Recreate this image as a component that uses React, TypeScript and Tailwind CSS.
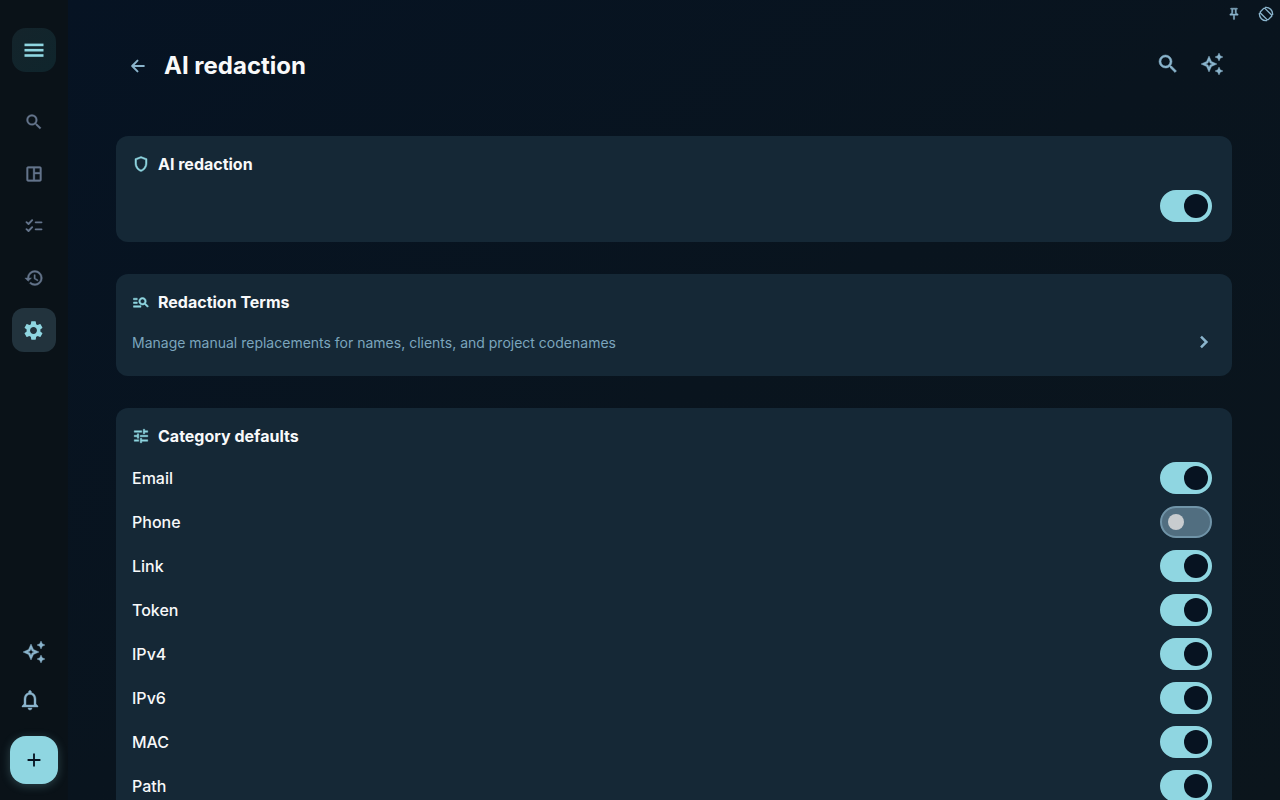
import { useState } from "react";
import type { ReactNode } from "react";
import {
  MdAdd,
  MdHistory,
  MdManageSearch,
  MdOutlineAutoAwesome,
  MdNotificationsNone,
  MdOutlinePushPin,
  MdOutlineShield,
  MdOutlineSpaceDashboard,
  MdSearch,
  MdSettings,
  MdTune,
} from "react-icons/md";

// Thickens the icon outlines; the empty bounding path must stay unstroked
const BOLD = "[&>path[fill=none]]:stroke-none";

const NAV_ITEMS = [
  { id: "search", label: "Search", icon: <MdSearch size={20} strokeWidth={0.4} className={BOLD} /> },
  { id: "board", label: "Board", icon: <MdOutlineSpaceDashboard size={20} strokeWidth={0.4} className={BOLD} /> },
  { id: "tasks", label: "Tasks", icon: <ChecklistIcon /> },
  { id: "history", label: "History", icon: <MdHistory size={20} strokeWidth={0.5} className={BOLD} /> },
  { id: "settings", label: "Settings", icon: <MdSettings size={23} /> },
];

const CATEGORIES = ["Email", "Phone", "Link", "Token", "IPv4", "IPv6", "MAC", "Path"];

function MenuIcon() {
  return (
    <svg width="24" height="24" viewBox="0 0 24 24" fill="currentColor">
      <rect x="2.5" y="5.6" width="19" height="2.6" />
      <rect x="2.5" y="10.9" width="19" height="2.6" />
      <rect x="2.5" y="16.2" width="19" height="2.6" />
    </svg>
  );
}

function ChecklistIcon() {
  return (
    <svg
      width="20"
      height="20"
      viewBox="0 0 24 24"
      fill="none"
      stroke="currentColor"
      strokeWidth="2.3"
      strokeLinecap="round"
      strokeLinejoin="round"
    >
      <path d="M3 7.4l2.4 2.2L9.8 5M3 15.8l2.4 2.2 4.4-4.6M14 7.6h7M14 16h7" />
    </svg>
  );
}

function BackIcon() {
  return (
    <svg
      width="20"
      height="20"
      viewBox="0 0 24 24"
      fill="none"
      stroke="currentColor"
      strokeWidth="2.4"
      strokeLinecap="round"
      strokeLinejoin="round"
    >
      <path d="M19 12H5.4M11.4 5.6L5 12l6.4 6.4" />
    </svg>
  );
}

function ChevronIcon() {
  return (
    <svg width="24" height="24" viewBox="0 0 24 24" fill="none" stroke="currentColor" strokeWidth="2.5">
      <path d="M9 6.6l5.4 5.4L9 17.4" />
    </svg>
  );
}

// Tilted phone inside a broken ring
function RotationIcon() {
  return (
    <svg width="16" height="16" viewBox="0 0 24 24" fill="none" stroke="currentColor" strokeWidth="2.1">
      <rect x="7.2" y="3.6" width="9.6" height="16.8" rx="1.8" transform="rotate(-45 12 12)" />
      <path d="M10.5 2.2a10 10 0 0 1 11.3 11.3M13.5 21.8A10 10 0 0 1 2.2 10.5" />
    </svg>
  );
}

function Toggle({ label, defaultOn = true }: { label: string; defaultOn?: boolean }) {
  const [on, setOn] = useState(defaultOn);

  return (
    <button
      type="button"
      role="switch"
      aria-checked={on}
      aria-label={label}
      onClick={() => setOn((v) => !v)}
      className={`flex h-8 w-[52px] shrink-0 items-center rounded-full border-2 ${
        on ? "justify-end border-[#8fd6e1] bg-[#8fd6e1] pr-0.5" : "border-[#7094a8] bg-[#516e80] pl-1.5"
      }`}
    >
      <span className={on ? "size-6 rounded-full bg-[#071321]" : "size-4 rounded-full bg-[#c8cccf]"} />
    </button>
  );
}

function Card({ icon, title, children }: { icon: ReactNode; title: string; children: ReactNode }) {
  return (
    <section className="flex flex-col gap-2 rounded-xl bg-[#152836] px-4 pt-4 pb-3.5">
      <div className="flex h-6 items-center gap-2">
        <span className="text-[#8fd6e1]">{icon}</span>
        <h2 className="text-base font-bold text-[#f8f9fa]">{title}</h2>
      </div>
      {children}
    </section>
  );
}

function Sidebar() {
  const [active, setActive] = useState("settings");

  return (
    <aside className="flex w-[68px] shrink-0 flex-col items-center border-r border-[#0a1219] bg-[#0a1218] pt-7 pb-4">
      <button
        type="button"
        aria-label="Menu"
        className="flex size-11 items-center justify-center rounded-[14px] bg-linear-to-br from-[#14242b] to-[#0f252c] text-[#8fd6e1]"
      >
        <MenuIcon />
      </button>

      <nav className="mt-7 flex flex-col gap-2">
        {NAV_ITEMS.map((item) => (
          <button
            key={item.id}
            type="button"
            aria-label={item.label}
            onClick={() => setActive(item.id)}
            className={`flex size-11 items-center justify-center rounded-xl ${
              active === item.id ? "bg-[#22333d] text-[#8fd6e1]" : "text-[#64748b]"
            }`}
          >
            {item.icon}
          </button>
        ))}
      </nav>

      <div className="mt-auto flex flex-col items-center text-[#8ab4cc]">
        <button type="button" aria-label="Assistant" className="flex size-12 items-center justify-center">
          <MdOutlineAutoAwesome size={24} strokeWidth={0.4} className={BOLD} />
        </button>
        <button type="button" aria-label="Notifications" className="flex size-12 items-center justify-center pr-2">
          <MdNotificationsNone size={24} strokeWidth={0.4} className={BOLD} />
        </button>
        <button
          type="button"
          aria-label="Add"
          className="mt-3 flex size-12 items-center justify-center rounded-2xl bg-[#8fd6e1] text-[#071321] shadow-[0_2px_10px_rgba(143,214,225,0.25)]"
        >
          <MdAdd size={22} />
        </button>
      </div>
    </aside>
  );
}

export default function App() {
  return (
    <div className="flex h-screen overflow-hidden bg-[#0a1218] font-['Inter',sans-serif] antialiased">
      <Sidebar />

      <div className="flex min-w-0 flex-1 flex-col bg-linear-to-br from-[#061323] via-[#09141e] to-[#0b151c]">
        {/* Window controls */}
        <div className="flex h-7 shrink-0 justify-end gap-1 text-[#8ab4cc]">
          <button type="button" aria-label="Pin window" className="flex size-7 items-center justify-center">
            <MdOutlinePushPin size={14} strokeWidth={0.8} className={BOLD} />
          </button>
          <button type="button" aria-label="Rotate" className="flex size-7 items-center justify-center">
            <RotationIcon />
          </button>
        </div>

        <header className="flex h-[72px] shrink-0 items-center justify-between px-12">
          <div className="flex items-center gap-1 pt-1">
            <button type="button" aria-label="Back" className="flex size-11 items-center justify-center text-[#8ab4cc]">
              <BackIcon />
            </button>
            <h1 className="text-2xl font-bold text-[#f8f9fa]">AI redaction</h1>
          </div>
          <div className="flex gap-1 text-[#8ab4cc]">
            <button type="button" aria-label="Search" className="flex size-10 items-center justify-center">
              <MdSearch size={24} strokeWidth={0.5} className={BOLD} />
            </button>
            <button type="button" aria-label="Assistant" className="flex size-10 items-center justify-center">
              <MdOutlineAutoAwesome size={24} strokeWidth={0.4} className={BOLD} />
            </button>
          </div>
        </header>

        <main className="flex min-h-0 flex-1 flex-col overflow-y-auto px-12 pt-9 [scrollbar-width:none]">
          <div className="flex flex-col gap-8 pb-8">
            <Card
              icon={<MdOutlineShield size={18} strokeWidth={0.6} className={BOLD} />}
              title="AI redaction"
            >
              <div className="flex h-11 items-center justify-end pr-1">
                <Toggle label="AI redaction" />
              </div>
            </Card>

            <Card
              icon={<MdManageSearch size={18} strokeWidth={0.7} className={BOLD} />}
              title="Redaction Terms"
            >
              <a href="#terms" className="flex h-10 items-center justify-between text-[#8ab4cc]">
                <span className="pt-0.5 text-sm text-[#7ba5bd]">
                  Manage manual replacements for names, clients, and project codenames
                </span>
                <ChevronIcon />
              </a>
            </Card>

            <Card icon={<MdTune size={18} strokeWidth={0.6} className={BOLD} />} title="Category defaults">
              <ul>
                {CATEGORIES.map((name) => (
                  <li key={name} className="flex h-11 items-center justify-between pr-1">
                    <span className="text-base font-medium text-[#f8f9fa]">{name}</span>
                    <Toggle label={name} defaultOn={name !== "Phone"} />
                  </li>
                ))}
              </ul>
            </Card>
          </div>
        </main>
      </div>
    </div>
  );
}
